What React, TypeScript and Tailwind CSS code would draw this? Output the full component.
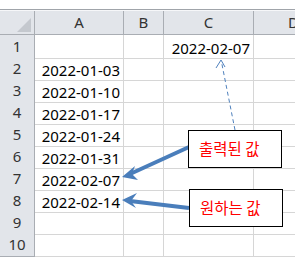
const rows = [
  { n: 1, a: '', c: '2022-02-07' },
  { n: 2, a: '2022-01-03', c: '' },
  { n: 3, a: '2022-01-10', c: '' },
  { n: 4, a: '2022-01-17', c: '' },
  { n: 5, a: '2022-01-24', c: '' },
  { n: 6, a: '2022-01-31', c: '' },
  { n: 7, a: '2022-02-07', c: '' },
  { n: 8, a: '2022-02-14', c: '' },
  { n: 9, a: '', c: '' },
  { n: 10, a: '', c: '' },
]

const cols = 'grid grid-cols-[35px_89px_40px_90px_1fr]'
const hdr = 'bg-[#e2e5ea] border-r border-b border-[#a9adb3] flex items-center justify-center text-[#333] text-[15px]'
const cell = 'border-r border-b border-[#d6d6d6] flex items-end justify-end pr-[3px] pb-[2px] text-black text-[15px] leading-none'

export default function App() {
  return (
    <div className="relative w-[295px] h-[259px] overflow-hidden bg-white font-['Noto_Sans','Liberation_Sans',sans-serif]">
      {/* ribbon edge */}
      <div className="h-[9px]" />
      <div className="h-[2px] border-t border-[#a0a4aa] bg-[#f6f7f9]" />

      {/* column headers */}
      <div className={`${cols} h-[24px]`}>
        <div className={`${hdr} relative`}>
          <svg width="35" height="24" className="absolute inset-0">
            <polygon points="17,21 31,21 31,7" fill="#c4c8ce" />
          </svg>
        </div>
        <div className={hdr}>A</div>
        <div className={hdr}>B</div>
        <div className={hdr}>C</div>
        <div className={`${hdr} justify-start pl-[34px] border-r-0`}>D</div>
      </div>

      {/* rows */}
      {rows.map((r) => (
        <div key={r.n} className={`${cols} h-[22px]`}>
          <div className={hdr}>{r.n}</div>
          <div className={cell}>{r.a}</div>
          <div className={cell} />
          <div className={cell}>{r.c}</div>
          <div className="border-b border-[#d6d6d6]" />
        </div>
      ))}

      {/* arrows */}
      <svg width="295" height="259" className="absolute inset-0 pointer-events-none">
        <line x1="235" y1="130" x2="221.5" y2="62" stroke="#4f81bd" strokeWidth="1" strokeDasharray="4 3" />
        <polyline points="216,68 221,60 225,67" fill="none" stroke="#4f81bd" strokeWidth="1" />

        <line x1="189" y1="147" x2="130" y2="174" stroke="#4a7ebb" strokeWidth="4" />
        <polygon points="122,177 135,166 132,174 138,180" fill="#4a7ebb" />

        <line x1="189" y1="208" x2="130" y2="201" stroke="#4a7ebb" strokeWidth="4" />
        <polygon points="122,200 137,193 131,201 136,208" fill="#4a7ebb" />
      </svg>

      {/* callouts */}
      <div className="absolute left-[188px] top-[130px] w-[94px] h-[38px] bg-white border-[1.5px] border-black flex items-center pl-[10px] text-[#ff0000] text-[15.5px] font-['Noto_Sans_CJK_KR',sans-serif]">
        출력된 값
      </div>
      <div className="absolute left-[189px] top-[189px] w-[94px] h-[38px] bg-white border-[1.5px] border-black flex items-center pl-[10px] text-[#ff0000] text-[15.5px] font-['Noto_Sans_CJK_KR',sans-serif]">
        원하는 값
      </div>
    </div>
  )
}
